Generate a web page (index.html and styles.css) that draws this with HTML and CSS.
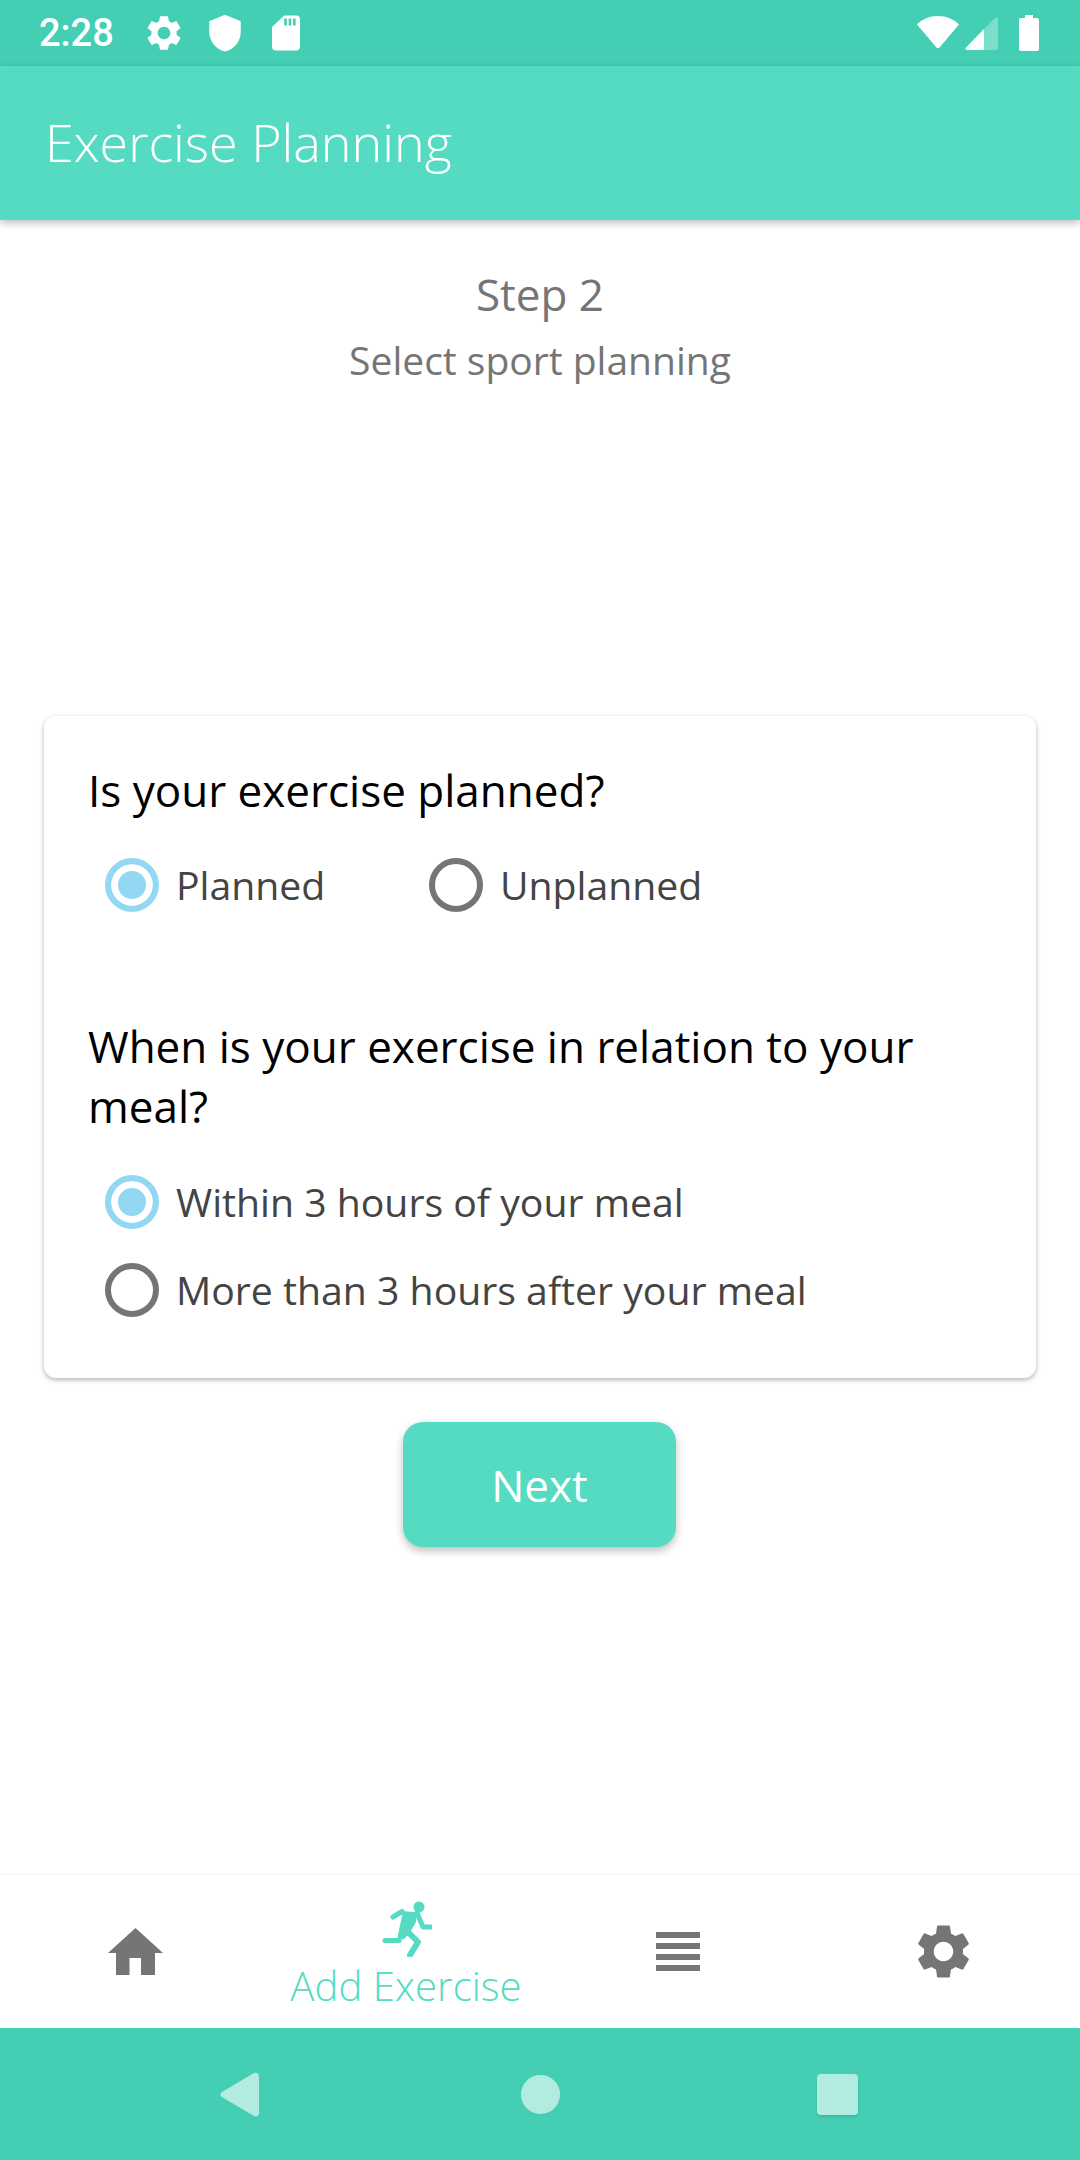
FILE: index.html
```html
<!DOCTYPE html>
<html>
<head>
    <link rel="stylesheet" href="styles.css">
</head>

<body>
    <div class="screen">
        <div class="status_bar">
            <span class="status_time">2:28</span>
            <svg class="status_icon" viewBox="0 0 24 24"><path d="M19.14 12.94c.04-.3.06-.61.06-.94 0-.32-.02-.64-.07-.94l2.03-1.58c.18-.14.23-.41.12-.61l-1.92-3.32c-.12-.22-.37-.29-.59-.22l-2.39.96c-.5-.38-1.03-.7-1.62-.94l-.36-2.54c-.04-.24-.24-.41-.48-.41h-3.84c-.24 0-.43.17-.47.41l-.36 2.54c-.59.24-1.13.57-1.62.94l-2.39-.96c-.22-.08-.47 0-.59.22L2.74 8.87c-.12.21-.08.47.12.61l2.03 1.58c-.05.3-.09.63-.09.94s.02.64.07.94l-2.03 1.58c-.18.14-.23.41-.12.61l1.92 3.32c.12.22.37.29.59.22l2.39-.96c.5.38 1.03.7 1.62.94l.36 2.54c.05.24.24.41.48.41h3.84c.24 0 .44-.17.47-.41l.36-2.54c.59-.24 1.13-.56 1.62-.94l2.39.96c.22.08.47 0 .59-.22l1.92-3.32c.12-.22.07-.47-.12-.61l-2.01-1.58zM12 15.6c-1.98 0-3.6-1.62-3.6-3.6s1.62-3.6 3.6-3.6 3.6 1.62 3.6 3.6-1.62 3.6-3.6 3.6z"/></svg>
            <svg class="status_icon" viewBox="0 0 24 24"><path d="M12 1.5 3 5.3v6c0 5.4 3.8 10.2 9 11.2 5.200-1 9-5.800 9-11.200v-6z"/></svg>
            <svg class="status_icon" viewBox="0 0 24 24"><path fill-rule="evenodd" d="M11 2h7c1.100 0 2 .9 2 2v16c0 1.100-.9 2-2 2H6c-1.100 0-2-.9-2-2V8.500zm0 1.700v4h1.500v-4zm2.500 0v4H15v-4zm2.500 0v4h1.500v-4z"/></svg>
            <div class="status_right">
                <svg class="wifi_icon" viewBox="0 0 42 33"><path d="M0 8.500C5.500 3 12.500 0 21 0s15.500 3 21 8.500L22.500 31.500c-.8 1-2.200 1-3 0z"/></svg>
                <svg class="signal_icon" viewBox="0 0 33 33"><path class="signal_empty" d="M19 12 30 1c1-1 3-.5 3 1v29c0 1-1 2-2 2H19z"/><path d="M19 12v21H2c-1.500 0-2-1.500-1-2.500z"/></svg>
                <svg class="battery_icon" viewBox="0 0 20 36"><path d="M6 0h8v3h4c1.100 0 2 .9 2 2v29c0 1.100-.9 2-2 2H2c-1.100 0-2-.9-2-2V5c0-1.100.9-2 2-2h4z"/></svg>
            </div>
        </div>

        <div class="app_bar">Exercise Planning</div>

        <div class="content">
            <div class="step_title">Step 2</div>
            <div class="step_subtitle">Select sport planning</div>

            <div class="card">
                <div class="question">Is your exercise planned?</div>
                <div class="radio_row">
                    <div class="radio_item planned_item">
                        <span class="radio radio_on"></span>
                        <span class="radio_label">Planned</span>
                    </div>
                    <div class="radio_item">
                        <span class="radio"></span>
                        <span class="radio_label">Unplanned</span>
                    </div>
                </div>

                <div class="question second_question">When is your exercise in relation to your meal?</div>
                <div class="radio_column">
                    <div class="radio_item">
                        <span class="radio radio_on"></span>
                        <span class="radio_label">Within 3 hours of your meal</span>
                    </div>
                    <div class="radio_item">
                        <span class="radio"></span>
                        <span class="radio_label">More than 3 hours after your meal</span>
                    </div>
                </div>
            </div>

            <button class="next_button">Next</button>
        </div>

        <div class="tab_bar">
            <div class="tab">
                <svg class="home_icon" viewBox="0 0 55 47"><path fill-rule="evenodd" d="M27.500 0 55 25h-8v22H33V30H21.500v17H8V25H0z"/></svg>
            </div>
            <div class="tab tab_active">
                <svg class="run_icon" viewBox="0 0 50 56">
                    <circle cx="37" cy="6" r="5.500"/>
                    <path d="M21 10l14 1.500-1 9.500-7 12-5 5-7 1z"/>
                    <path class="run_thin" d="M11 16l9-5.500"/>
                    <path class="run_thin" d="M35 12l6 14h8"/>
                    <path class="run_thin" d="M3 39.500h14"/>
                    <path class="run_thin run_leg" d="M26 31l10 10-8 13"/>
                </svg>
                <span class="tab_label">Add Exercise</span>
            </div>
            <div class="tab">
                <div class="list_icon">
                    <span></span><span></span><span></span><span></span>
                </div>
            </div>
            <div class="tab">
                <svg class="gear_icon" viewBox="0 0 24 24"><path d="M19.14 12.94c.04-.3.06-.61.06-.94 0-.32-.02-.64-.07-.94l2.03-1.58c.18-.14.23-.41.12-.61l-1.92-3.32c-.12-.22-.37-.29-.59-.22l-2.39.96c-.5-.38-1.03-.7-1.62-.94l-.36-2.54c-.04-.24-.24-.41-.48-.41h-3.84c-.24 0-.43.17-.47.41l-.36 2.54c-.59.24-1.13.57-1.62.94l-2.39-.96c-.22-.08-.47 0-.59.22L2.74 8.87c-.12.21-.08.47.12.61l2.03 1.58c-.05.3-.09.63-.09.94s.02.64.07.94l-2.03 1.58c-.18.14-.23.41-.12.61l1.92 3.32c.12.22.37.29.59.22l2.39-.96c.5.38 1.03.7 1.62.94l.36 2.54c.05.24.24.41.48.41h3.84c.24 0 .44-.17.47-.41l.36-2.54c.59-.24 1.13-.56 1.62-.94l2.39.96c.22.08.47 0 .59-.22l1.92-3.32c.12-.22.07-.47-.12-.61l-2.01-1.58zM12 15.6c-1.98 0-3.6-1.62-3.6-3.6s1.62-3.6 3.6-3.6 3.6 1.62 3.6 3.6-1.62 3.6-3.6 3.6z"/></svg>
            </div>
        </div>

        <div class="nav_bar">
            <svg class="nav_back" viewBox="0 0 39 45"><path d="M2 20 34 1c2-1 5 0 5 3v37c0 3-3 4-5 3L2 25c-2-1-2-4 0-5z"/></svg>
            <span class="nav_home"></span>
            <span class="nav_recent"></span>
        </div>
    </div>
</body>

</html>
```

FILE: styles.css
```css
/* General body styles */
body {
    font-family: "Open Sans", sans-serif;
    margin: 0;
    padding: 0;
    background-color: #fff;
}

.screen {
    display: flex;
    flex-direction: column;
    width: 1080px;
    height: 2160px;
    overflow: hidden;
}

/* Status bar */
.status_bar {
    display: flex;
    align-items: center;
    height: 66px;
    padding: 0 41px 0 39px;
    box-sizing: border-box;
    background-color: #44cfb5;
    fill: #fff;
}

.status_time {
    width: 104px;
    font-family: Roboto, sans-serif;
    font-size: 38px;
    font-weight: 500;
    color: #fff;
}

.status_icon {
    width: 42px;
    height: 42px;
    margin-right: 19px;
}

.status_right {
    display: flex;
    align-items: center;
    margin-left: auto;
}

.wifi_icon {
    width: 42px;
    height: 33px;
    margin-right: 6px;
    margin-bottom: 2px;
}

.signal_icon {
    width: 33px;
    height: 33px;
    margin-right: 21px;
}

.signal_empty {
    opacity: 0.3;
}

.battery_icon {
    width: 20px;
    height: 36px;
}

/* Title bar */
.app_bar {
    position: relative;
    height: 154px;
    padding-left: 45px;
    line-height: 152px;
    font-size: 52px;
    font-weight: 300;
    color: #fff;
    background-color: #55dbc2;
    box-shadow: 0 3px 8px rgba(0, 0, 0, 0.25);
}

/* Main part */
.content {
    display: flex;
    flex-direction: column;
    align-items: center;
    flex: 1;
    padding-top: 49px;
}

.step_title {
    font-size: 44px;
    line-height: 50px;
    color: #757575;
}

.step_subtitle {
    margin-top: 16px;
    font-size: 39px;
    line-height: 50px;
    color: #757575;
}

.card {
    width: 992px;
    margin-top: 331px;
    padding: 44px 44px 61px;
    box-sizing: border-box;
    background-color: #fff;
    border-radius: 12px;
    box-shadow: 0 2px 5px rgba(0, 0, 0, 0.3);
}

.question {
    font-size: 44px;
    line-height: 60px;
    color: #000;
}

.second_question {
    margin-top: 104px;
}

.radio_row {
    display: flex;
    margin-top: 38px;
    padding-left: 17px;
}

.radio_column {
    display: flex;
    flex-direction: column;
    gap: 34px;
    margin-top: 39px;
    padding-left: 17px;
}

.radio_item {
    display: flex;
    align-items: center;
    gap: 17px;
    height: 54px;
}

.planned_item {
    width: 324px;
}

.radio {
    width: 54px;
    height: 54px;
    box-sizing: border-box;
    border: 6px solid #757575;
    border-radius: 50%;
}

.radio_on {
    border-color: #93d8f3;
    background-color: #93d8f3;
    box-shadow: inset 0 0 0 7px #fff;
}

.radio_label {
    padding-bottom: 2px;
    font-size: 39.2px;
    color: #444;
}

.next_button {
    width: 273px;
    height: 125px;
    margin-top: 44px;
    margin-right: 1px;
    padding: 0;
    border: none;
    border-radius: 20px;
    font-family: "Open Sans", sans-serif;
    font-size: 44px;
    color: #fff;
    background-color: #55dbc2;
    box-shadow: 0 4px 8px rgba(0, 0, 0, 0.25);
}

/* Bottom tabs */
.tab_bar {
    display: flex;
    height: 154px;
    border-top: 1px solid #f3f3f3;
    box-sizing: border-box;
}

.tab {
    display: flex;
    flex-direction: column;
    align-items: center;
    justify-content: center;
    flex: 1;
    fill: #757575;
}

.tab_active {
    justify-content: flex-start;
    padding-top: 26px;
    fill: #55dbc2;
}

.home_icon {
    width: 55px;
    height: 47px;
}

.run_icon {
    width: 50px;
    height: 56px;
    margin-left: 4px;
}

.run_thin {
    fill: none;
    stroke: #55dbc2;
    stroke-width: 5;
    stroke-linecap: round;
    stroke-linejoin: round;
}

.run_leg {
    stroke-width: 6;
}

.tab_label {
    margin-top: 4px;
    margin-left: 2px;
    font-size: 40.2px;
    line-height: 50px;
    font-weight: 350;
    color: #55dbc2;
}

.list_icon {
    display: flex;
    flex-direction: column;
    gap: 5px;
    width: 44px;
    margin-left: 6px;
}

.list_icon span {
    height: 6px;
    background-color: #757575;
}

.gear_icon {
    width: 65px;
    height: 65px;
    margin-right: 4px;
}

/* Android buttons */
.nav_bar {
    display: flex;
    align-items: center;
    justify-content: center;
    height: 132px;
    padding-right: 3px;
    background-color: #44cfb5;
}

.nav_back {
    width: 39px;
    height: 45px;
    margin-right: 262px;
    fill: #b2ece1;
}

.nav_home {
    width: 39px;
    height: 39px;
    margin-right: 257px;
    border-radius: 50%;
    background-color: #b2ece1;
}

.nav_recent {
    width: 41px;
    height: 41px;
    border-radius: 4px;
    background-color: #b2ece1;
    box-shadow: 0 2px 3px rgba(0, 0, 0, 0.12);
}
```
